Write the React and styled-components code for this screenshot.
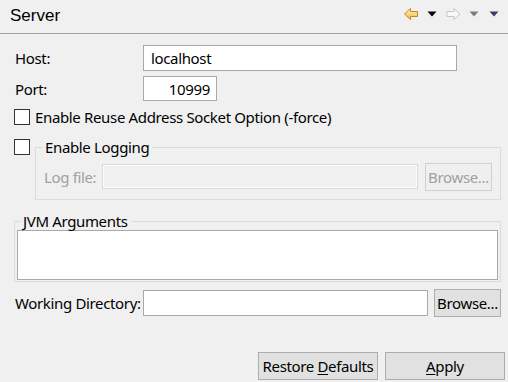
import React from "react";
import styled, { createGlobalStyle } from "styled-components";

const GlobalStyle = createGlobalStyle`
  html, body {
    margin: 0;
    padding: 0;
    background: #f0f0f0;
  }
  body {
    width: 508px;
    height: 382px;
    overflow: hidden;
    font-family: "Noto Sans", "Open Sans", sans-serif;
    font-size: 15px;
    letter-spacing: -0.35px;
    color: #000;
  }
`;

const Page = styled.div`
  width: 508px;
  height: 382px;
  background: #f0f0f0;
`;

const Header = styled.div`
  height: 33px;
  border-bottom: 1px solid #a0a0a0;
  display: flex;
  align-items: center;
  justify-content: space-between;
  padding: 0 9px 0 10px;
  box-sizing: content-box;
`;

const Title = styled.div`
  font-family: "Liberation Sans", Arial, sans-serif;
  font-size: 17px;
  letter-spacing: 0;
  margin-top: -1px;
`;

const Toolbar = styled.div`
  display: flex;
  align-items: center;
  margin-top: -5px;
`;

const ToolIcon = styled.span`
  display: flex;
  margin-left: ${(p) => p.$gap || 0}px;
`;

const Body = styled.div`
  display: flex;
  flex-direction: column;
  padding: 11px 7px 0 14px;
`;

const Row = styled.div`
  display: flex;
  align-items: ${(p) => p.$align || "center"};
  height: ${(p) => (p.$h ? p.$h + "px" : "auto")};
  margin-top: ${(p) => p.$top || 0}px;
`;

const Label = styled.label`
  width: ${(p) => p.$w || 128}px;
  padding-left: 1px;
  flex-shrink: 0;
  white-space: nowrap;
  color: ${(p) => (p.$disabled ? "#a0a0a0" : "#000")};
`;

const TextInput = styled.input`
  box-sizing: border-box;
  height: ${(p) => p.$h || 26}px;
  width: ${(p) => (p.$w ? p.$w + "px" : "auto")};
  flex: ${(p) => (p.$w ? "none" : 1)};
  min-width: 0;
  border: 1px solid #a9a9a9;
  background: #fff;
  font: inherit;
  letter-spacing: inherit;
  color: #000;
  padding: 0 6px 0 7px;
  text-align: ${(p) => p.$align || "left"};
  outline: none;
  &:disabled {
    border-color: #d9d9d9;
    background: #f0f0f0;
    box-shadow: inset 0 0 0 1px #fcfcfc;
  }
`;

const Button = styled.button`
  box-sizing: border-box;
  width: ${(p) => p.$w || 67}px;
  height: ${(p) => p.$h || 28}px;
  margin-left: ${(p) => p.$gap || 0}px;
  flex-shrink: 0;
  border: 1px solid #adadad;
  background: #e1e1e1;
  font: inherit;
  letter-spacing: inherit;
  color: #000;
  padding: 0;
  &:disabled {
    border-color: #d0d0d0;
    background: #efefef;
    color: #a0a0a0;
  }
  u {
    text-decoration: underline;
    text-underline-offset: 2px;
  }
`;

const CheckBox = styled.span`
  box-sizing: border-box;
  width: 16px;
  height: 16px;
  border: 1px solid #333;
  background: #fff;
  flex-shrink: 0;
  margin-top: ${(p) => p.$top || 0}px;
`;

const CheckText = styled.span`
  margin-left: 5px;
  white-space: nowrap;
`;

const Group = styled.fieldset`
  flex: 1;
  margin: 0;
  min-width: 0;
  border: 1px solid #dcdcdc;
  padding: ${(p) => p.$pad};
  margin-left: ${(p) => p.$gap || 0}px;
`;

const Legend = styled.legend`
  padding: 0 3px 0 2px;
  margin-left: ${(p) => p.$offset || 0}px;
  line-height: 18px;
  font-size: 15px;
`;

const ArgsArea = styled.textarea`
  display: block;
  box-sizing: border-box;
  width: 100%;
  height: 50px;
  border: 1px solid #a9a9a9;
  background: #fff;
  resize: none;
  font: inherit;
  margin: 0;
  outline: none;
`;

const Footer = styled.div`
  display: flex;
  justify-content: flex-end;
  margin-top: 35px;
  margin-right: -4px;
`;

function BackArrow() {
  return (
    <svg width="15" height="12" viewBox="0 0 15 12">
      <defs>
        <linearGradient id="back" x1="0" y1="0" x2="0" y2="1">
          <stop offset="0" stopColor="#fff4c8" />
          <stop offset="1" stopColor="#f3b53a" />
        </linearGradient>
      </defs>
      <path
        d="M0.5 6 L6.5 0.5 L6.5 3.5 L13.5 3.5 L13.5 8.5 L6.5 8.5 L6.5 11.5 Z"
        fill="url(#back)"
        stroke="#c8871a"
        strokeLinejoin="round"
      />
    </svg>
  );
}

function ForwardArrow() {
  return (
    <svg width="15" height="12" viewBox="0 0 15 12">
      <path
        d="M14 6 L8 0.5 L8 3.5 L1 3.5 L1 8.5 L8 8.5 L8 11.5 Z"
        fill="#f8f8f8"
        stroke="#c6c6c6"
        strokeLinejoin="round"
      />
    </svg>
  );
}

function DropTriangle({ color }) {
  return (
    <svg width="10" height="6" viewBox="0 0 10 6">
      <path d="M0.5 0.5 L9.5 0.5 L5 5.5 Z" fill={color} />
    </svg>
  );
}

export default function App() {
  return (
    <Page>
      <GlobalStyle />
      <Header>
        <Title>Server</Title>
        <Toolbar>
          <ToolIcon>
            <BackArrow />
          </ToolIcon>
          <ToolIcon $gap={8}>
            <DropTriangle color="#000" />
          </ToolIcon>
          <ToolIcon $gap={9}>
            <ForwardArrow />
          </ToolIcon>
          <ToolIcon $gap={8}>
            <DropTriangle color="#7c7c7c" />
          </ToolIcon>
          <ToolIcon $gap={10}>
            <DropTriangle color="#3c3c6c" />
          </ToolIcon>
        </Toolbar>
      </Header>

      <Body>
        <Row $h={26}>
          <Label>Host:</Label>
          <TextInput $w={314} defaultValue="localhost" />
        </Row>
        <Row $h={25} $top={5}>
          <Label>Port:</Label>
          <TextInput $w={74} $h={25} $align="right" defaultValue="10999" />
        </Row>
        <Row $h={20} $top={6}>
          <CheckBox />
          <CheckText>Enable Reuse Address Socket Option (-force)</CheckText>
        </Row>
        <Row $align="flex-start" $top={11}>
          <CheckBox $top={1} />
          <Group $gap={5} $pad="7px 8px 9px 7px">
            <Legend>Enable Logging</Legend>
            <Row $h={27}>
              <Label $w={58} $disabled>
                Log file:
              </Label>
              <TextInput $h={25} disabled />
              <Button $gap={7} disabled>
                Browse...
              </Button>
            </Row>
          </Group>
        </Row>
        <Row $top={12}>
          <Group $pad="0 2px 1px 2px">
            <Legend $offset={4}>JVM Arguments</Legend>
            <ArgsArea />
          </Group>
        </Row>
        <Row $h={28} $top={7}>
          <Label>Working Directory:</Label>
          <TextInput />
          <Button $gap={6}>Browse...</Button>
        </Row>
        <Footer>
          <Button $w={120}>
            Restore <u>D</u>efaults
          </Button>
          <Button $w={120} $gap={7}>
            <u>A</u>pply
          </Button>
        </Footer>
      </Body>
    </Page>
  );
}
